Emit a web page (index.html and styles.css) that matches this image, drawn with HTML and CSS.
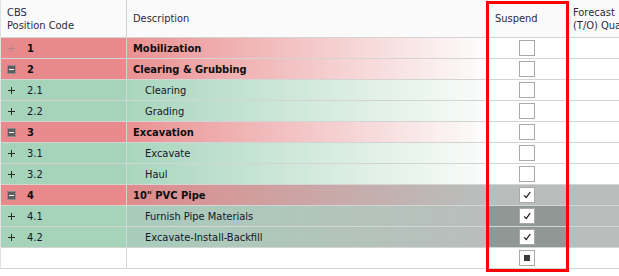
FILE: index.html
```html
<!DOCTYPE html>
<html>
<head>
<meta charset="utf-8">
<link rel="stylesheet" href="styles.css">
</head>
<body>
<div class="grid">
  <div class="row head">
    <div class="cell"><span class="htext">CBS<br>Position Code</span></div>
    <div class="cell"><span class="htext">Description</span></div>
    <div class="cell sus"><span class="htext">Suspend</span></div>
    <div class="cell"><span class="htext">Forecast<br>(T/O) Quantity</span></div>
  </div>

  <div class="row red">
    <div class="cell code"><span class="plus dim"></span><b>1</b></div>
    <div class="cell desc"><b>Mobilization</b></div>
    <div class="cell chk"><span class="box"></span></div>
    <div class="cell"></div>
  </div>
  <div class="row red">
    <div class="cell code"><span class="minus"></span><b>2</b></div>
    <div class="cell desc"><b>Clearing &amp; Grubbing</b></div>
    <div class="cell chk"><span class="box"></span></div>
    <div class="cell"></div>
  </div>
  <div class="row green">
    <div class="cell code"><span class="plus"></span>2.1</div>
    <div class="cell desc sub">Clearing</div>
    <div class="cell chk"><span class="box"></span></div>
    <div class="cell"></div>
  </div>
  <div class="row green">
    <div class="cell code"><span class="plus"></span>2.2</div>
    <div class="cell desc sub">Grading</div>
    <div class="cell chk"><span class="box"></span></div>
    <div class="cell"></div>
  </div>
  <div class="row red">
    <div class="cell code"><span class="minus"></span><b>3</b></div>
    <div class="cell desc"><b>Excavation</b></div>
    <div class="cell chk"><span class="box"></span></div>
    <div class="cell"></div>
  </div>
  <div class="row green">
    <div class="cell code"><span class="plus"></span>3.1</div>
    <div class="cell desc sub">Excavate</div>
    <div class="cell chk"><span class="box"></span></div>
    <div class="cell"></div>
  </div>
  <div class="row green">
    <div class="cell code"><span class="plus"></span>3.2</div>
    <div class="cell desc sub">Haul</div>
    <div class="cell chk"><span class="box"></span></div>
    <div class="cell"></div>
  </div>
  <div class="row red sel">
    <div class="cell code"><span class="minus"></span><b>4</b></div>
    <div class="cell desc"><b>10" PVC Pipe</b></div>
    <div class="cell chk"><span class="box"><svg viewBox="0 0 14 14" width="14" height="14"><path d="M4.2 7.4 L6.3 9.6 L10.2 4" fill="none" stroke="#1a1a1a" stroke-width="1.3"/></svg></span></div>
    <div class="cell"></div>
  </div>
  <div class="row green sel focus">
    <div class="cell code"><span class="plus"></span>4.1</div>
    <div class="cell desc sub">Furnish Pipe Materials</div>
    <div class="cell chk"><span class="box"><svg viewBox="0 0 14 14" width="14" height="14"><path d="M4.2 7.4 L6.3 9.6 L10.2 4" fill="none" stroke="#1a1a1a" stroke-width="1.3"/></svg></span></div>
    <div class="cell"></div>
  </div>
  <div class="row green sel focus">
    <div class="cell code"><span class="plus"></span>4.2</div>
    <div class="cell desc sub">Excavate-Install-Backfill</div>
    <div class="cell chk"><span class="box"><svg viewBox="0 0 14 14" width="14" height="14"><path d="M4.2 7.4 L6.3 9.6 L10.2 4" fill="none" stroke="#1a1a1a" stroke-width="1.3"/></svg></span></div>
    <div class="cell"></div>
  </div>
  <div class="row blank">
    <div class="cell"></div>
    <div class="cell"></div>
    <div class="cell chk"><span class="box"><span class="ind"></span></span></div>
    <div class="cell"></div>
  </div>

  <div class="highlight"></div>
</div>
</body>
</html>
```

FILE: styles.css
```css
html, body {
  margin: 0;
  padding: 0;
  background: #ffffff;
}

body {
  font-family: "DejaVu Sans", sans-serif;
  font-stretch: condensed;
  font-size: 11px;
  color: #16162a;
  width: 619px;
  height: 276px;
  overflow: hidden;
}

.grid {
  position: relative;
  display: flex;
  flex-direction: column;
  border-left: 1px solid #e2e2e2;
  width: 700px;
}

.row {
  display: grid;
  grid-template-columns: 126px 361px 79px 1fr;
  height: 20px;
  border-bottom: 1px solid #d4d4d4;
}

.cell {
  border-right: 1px solid #d4d4d4;
  display: flex;
  align-items: center;
  white-space: nowrap;
  overflow: hidden;
}

.head {
  height: 37px;
  background: #fafafa;
}

.head .cell {
  padding-left: 6px;
  color: #2a2a3c;
  line-height: 13px;
}

.head .cell.sus {
  padding-left: 7px;
}

.htext {
  display: block;
}

.code {
  padding-left: 6px;
}

.code b, .desc b {
  color: #0e0e0e;
}

.desc {
  padding-left: 6px;
}

.desc.sub {
  padding-left: 18px;
}

.chk {
  justify-content: center;
}

/* row colours */
.red .code {
  background: #e88a8b;
}
.red .desc {
  background: linear-gradient(to right, #ea9192, #fdfafa 97%, #ffffff);
}
.green .code {
  background: #a5d4bb;
}
.green .desc {
  background: linear-gradient(to right, #a8d6bd, #f8fbf9 97%, #ffffff);
}

.sel .cell:nth-child(3),
.sel .cell:nth-child(4) {
  background: #b9bebc;
}
.red.sel .desc {
  background: linear-gradient(to right, #df8b8c, #b9bebc 97%);
}
.green.sel .desc {
  background: linear-gradient(to right, #a8cdbb, #b9bebc 97%);
}
.focus .cell:nth-child(3) {
  background: #8f9895;
}

/* tree icons */
.plus {
  position: relative;
  width: 7px;
  height: 7px;
  margin-left: 1px;
  margin-right: 12px;
  flex: none;
}
.plus::before,
.plus::after {
  content: "";
  position: absolute;
  background: #2a2a2a;
}
.plus::before {
  left: 0;
  top: 3px;
  width: 7px;
  height: 1px;
}
.plus::after {
  left: 3px;
  top: 0;
  width: 1px;
  height: 7px;
}
.plus.dim::before,
.plus.dim::after {
  background: #b48687;
}

.minus {
  position: relative;
  width: 9px;
  height: 9px;
  box-sizing: border-box;
  background: #5e5e5e;
  border: 1px solid #8c8c8c;
  margin-right: 11px;
  flex: none;
}
.minus::after {
  content: "";
  position: absolute;
  left: 1px;
  top: 3px;
  width: 5px;
  height: 1px;
  background: #f2f2f2;
}

/* checkbox */
.box {
  width: 16px;
  height: 16px;
  box-sizing: border-box;
  border: 1px solid #a9a9a9;
  background: #ffffff;
  display: flex;
  align-items: center;
  justify-content: center;
}
.box svg {
  display: block;
}
.ind {
  width: 6px;
  height: 6px;
  background: #3a3a3a;
}

/* annotation frame */
.highlight {
  position: absolute;
  left: 485px;
  top: 1px;
  width: 77px;
  height: 265px;
  border: 3px solid #ff0000;
  pointer-events: none;
}
```
